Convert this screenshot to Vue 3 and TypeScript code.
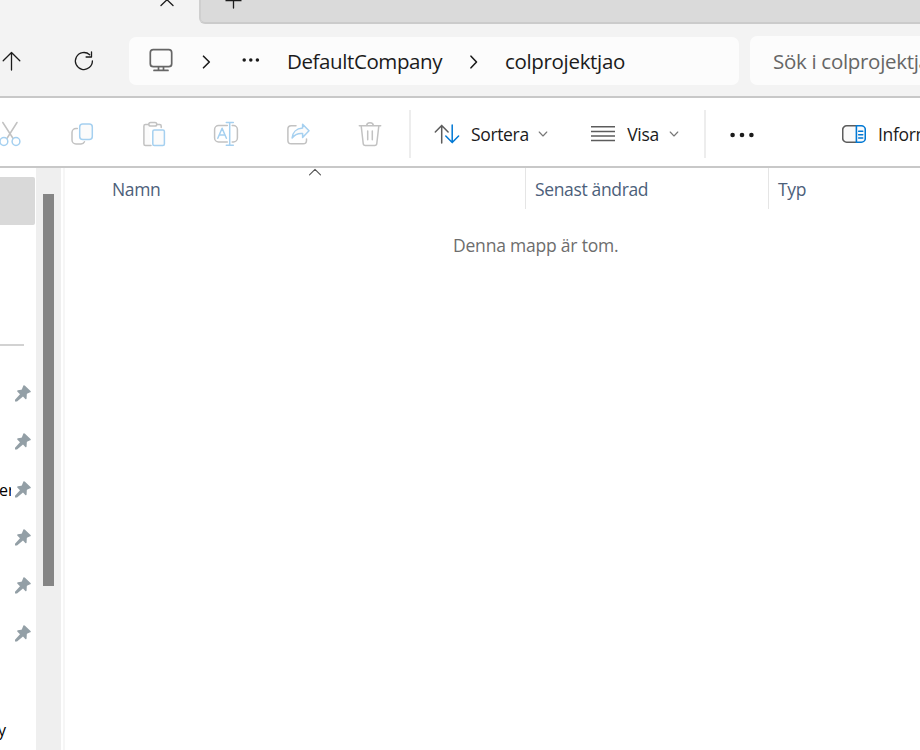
<script setup lang="ts">
interface Column {
  label: string
  cls: string
}

interface SideRow {
  id: number
  label: string
}

const columns: Column[] = [
  { label: 'Namn', cls: 'name' },
  { label: 'Senast ändrad', cls: 'date' },
  { label: 'Typ', cls: 'type' },
]

const pinned: SideRow[] = [
  { id: 1, label: '' },
  { id: 2, label: '' },
  { id: 3, label: 'er' },
  { id: 4, label: '' },
  { id: 5, label: '' },
  { id: 6, label: '' },
]
</script>

<template>
  <div class="window">
    <header class="tabs">
      <div class="active-tab">
        <svg class="close" width="16" height="24" viewBox="159 0 16 24"><path d="M161-6l12 11.5M173-6l-12 11.5" /></svg>
      </div>
      <div class="tab-strip">
        <svg width="18" height="22" viewBox="224 0 18 22"><path d="M226 .7h15M233.500-7V8" /></svg>
      </div>
    </header>

    <nav class="address">
      <svg class="up" width="24" height="24" viewBox="0 49 24 24"><path d="M11.500 70V52.500M3.200 60.800l8.300-8.300 8.300 8.300" /></svg>
      <svg class="refresh" width="24" height="24" viewBox="72 49 24 24"><path d="M92.400 60.800a8.500 8.500 0 1 1-2.700-6M91.500 51.800v5.200h-5.400" /></svg>
      <div class="crumbs">
        <svg class="monitor" width="24" height="24" viewBox="149 48 24 24">
          <rect x="150.300" y="49.700" width="21.400" height="17" rx="3" />
          <path d="M158.500 67v3M163.500 67v3M154 70.400h14" />
        </svg>
        <svg class="crumb-arrow first" width="10" height="16" viewBox="0 0 10 16"><path d="M2.500 2.200l5.800 5.800L2.500 13.800" /></svg>
        <svg class="crumb-dots" width="18" height="6" viewBox="0 0 18 6"><circle cx="2.200" cy="3" r="1.750" /><circle cx="8.800" cy="3" r="1.750" /><circle cx="15.400" cy="3" r="1.750" /></svg>
        <span class="crumb company">DefaultCompany</span>
        <svg class="crumb-arrow" width="10" height="16" viewBox="0 0 10 16"><path d="M2 2.200l5.500 5.800L2 13.800" /></svg>
        <span class="crumb project">colprojektjao</span>
      </div>
      <div class="search"><span>Sök i colprojektjao</span></div>
    </nav>

    <div class="toolbar">
      <div class="file-actions">
        <svg width="28" height="28" viewBox="0 0 28 28">
          <path class="g" d="M6.800 2.500l10.300 16M21 2.500L10.900 18.500" />
          <circle class="b" cx="7.900" cy="21.500" r="3.900" /><circle class="b" cx="20" cy="21.500" r="3.900" />
        </svg>
        <svg width="28" height="28" viewBox="0 0 28 28">
          <path class="g" d="M9.300 8.500H8a4 4 0 0 0-4 4V20a4 4 0 0 0 4 4h5q2.500 0 3.500-2.200" />
          <rect class="b f" x="11.700" y="4" width="12.600" height="15.400" rx="3" />
        </svg>
        <svg width="28" height="28" viewBox="0 0 28 28">
          <path class="g f" d="M8.700 4.500H5.400a1.500 1.500 0 0 0-1.500 1.500v18a1.500 1.500 0 0 0 1.500 1.500H11M16.700 4.500h3a1.500 1.500 0 0 1 1.500 1.500v1.500" />
          <rect class="g f" x="8.800" y="2.500" width="8" height="3.600" rx="1.800" />
          <rect class="b f" x="12.800" y="9.900" width="11.600" height="15.600" rx="1.500" />
        </svg>
        <svg width="28" height="28" viewBox="0 0 28 28">
          <path class="g" d="M15.300 5.600H6.600a4 4 0 0 0-4 4V18a4 4 0 0 0 4 4h8.700M20.200 5.600h1.200a4 4 0 0 1 4 4V18a4 4 0 0 1-4 4h-1.200" />
          <path class="b" d="M17.700 2.600v22.700M14.300 2.600h7M14.300 25.300h7M5.800 18.300l4.300-10 4.300 10M7.300 14.900h5.600" />
        </svg>
        <svg width="28" height="28" viewBox="0 0 28 28">
          <path class="g" d="M12 5.700H7.200a3.300 3.300 0 0 0-3.300 3.300v11.500A3.300 3.300 0 0 0 7.200 23.800h12a3.300 3.300 0 0 0 3.300-3.300V19" />
          <path class="b f" d="M18.600 4.300l6.400 6.500-6.400 6.600v-3.900c-4.600-.4-8 1.100-10.500 4.500.4-5.300 4-9.500 10.500-9.900z" />
        </svg>
        <svg width="28" height="28" viewBox="0 0 28 28">
          <path class="g" d="M3.300 5.700h21.400M10.700 5.700a3.300 3 0 0 1 6.600 0M5.200 6l2 17.500a2.200 2.200 0 0 0 2.200 2h9.200a2.200 2.200 0 0 0 2.200-2L22.800 6M11.700 11v8.700M16.300 11v8.700" />
        </svg>
      </div>
      <i class="divider" />
      <button class="sort">
        <svg width="26" height="22" viewBox="434 123 26 22">
          <path class="dark" d="M441.700 143v-17.600M435.300 132l6.400-6.600 6.400 6.600" />
          <path class="accent" d="M452.200 125v17.600M445.800 136l6.400 6.600 6.400-6.600" />
        </svg>
        <span class="label">Sortera</span>
        <svg class="drop" width="10" height="8" viewBox="0 0 10 8"><path d="M1.200 2l3.800 4 3.800-4" /></svg>
      </button>
      <button class="view">
        <svg width="24" height="18" viewBox="0 0 24 18"><path class="dark lines" d="M0 1.700h24M0 6.500h24M0 11h24M0 15.500h24" /></svg>
        <span class="label">Visa</span>
        <svg class="drop" width="10" height="8" viewBox="0 0 10 8"><path d="M1.200 2l3.800 4 3.800-4" /></svg>
      </button>
      <i class="divider" />
      <svg class="more" width="26" height="8" viewBox="0 0 26 8"><circle cx="3.600" cy="4" r="2.300" /><circle cx="13" cy="4" r="2.300" /><circle cx="22.400" cy="4" r="2.300" /></svg>
      <button class="info">
        <svg width="24" height="20" viewBox="0 0 24 20">
          <path class="dark pane" d="M14 1.800H4.700a4 4 0 0 0-4 4v8.400a4 4 0 0 0 4 4H14" />
          <path class="accent pane" d="M14.400 1.800h4.900a4 4 0 0 1 4 4v8.400a4 4 0 0 1-4 4h-4.900zM16.700 7.200h4M16.700 10.700h4M16.700 14h4" />
        </svg>
        <span class="label">Information</span>
      </button>
    </div>

    <main class="body">
      <aside class="sidebar">
        <div class="selected" />
        <div class="rule" />
        <div class="pins">
          <div v-for="row in pinned" :key="row.id" class="row">
            <span class="row-label">{{ row.label }}</span>
            <svg width="17" height="17" viewBox="0 0 17 17"><path d="M8.300.8c.6-.7 1.200-.5 1.700 0l5.500 5.100c.6.600.4 1.100-.4 1.400l-2.600 1.200c-.5.200-.7.500-.7.900l-.2 3.800c0 .9-.6 1.200-1.300.7L8 11.600 2 16.400H0v-1.600l5-5.500-2.500-2.500c-.6-.6-.3-1.300.4-1.500l3.400-.6c.4-.1.600-.4.700-.8z" /></svg>
          </div>
        </div>
        <div class="last">y</div>
      </aside>
      <div class="track"><div class="thumb" /></div>
      <section class="files">
        <div class="columns">
          <div v-for="column in columns" :key="column.label" :class="['column', column.cls]"><span>{{ column.label }}</span></div>
          <svg class="ascending" width="14" height="8" viewBox="0 0 14 8"><path d="M1.500 6.800L7 1.400l5.500 5.400" /></svg>
        </div>
        <p class="empty"><span>Denna mapp är tom.</span></p>
      </section>
    </main>
  </div>
</template>

<style>
body {
  background: #fff;
  overflow: hidden;
}
</style>

<style scoped>
.window {
  width: 920px;
  height: 750px;
  overflow: hidden;
  display: flex;
  flex-direction: column;
  background: #fff;
  font-family: "Open Sans", "Noto Sans", sans-serif;
  color: #1b1b1b;
}
.window * { box-sizing: border-box; }
svg { display: block; flex: none; fill: none; stroke-linecap: round; stroke-linejoin: round; }
span { white-space: nowrap; }

.tabs { height: 24px; flex: none; display: flex; background: #f3f3f3; }
.active-tab { width: 199px; display: flex; justify-content: flex-end; padding-right: 24px; }
.tabs path { stroke: #1b1b1b; stroke-width: 1.3; }
.tab-strip {
  flex: 1;
  padding-left: 23px;
  background: #dadada;
  border-bottom: 2px solid #cbcbcb;
  border-left: 2px solid #cfcfcf;
  border-bottom-left-radius: 6px;
}

.address {
  height: 74px;
  flex: none;
  display: flex;
  align-items: flex-start;
  background: #f3f3f3;
  border-bottom: 2px solid #c8c8c8;
}
.up, .refresh { margin-top: 25px; stroke: #1b1b1b; stroke-width: 1.3; }
.refresh { margin-left: 48px; }
.crumbs {
  width: 610px;
  height: 48px;
  flex: none;
  margin: 13px 0 0 33px;
  padding-left: 20px;
  display: flex;
  align-items: center;
  background: #fcfcfc;
  border-radius: 7px;
}
.monitor { margin-bottom: 2px; stroke: #666; stroke-width: 1.7; }
.crumb-arrow { margin-top: 2px; stroke: #1b1b1b; stroke-width: 1.6; }
.crumb-arrow.first { margin-left: 28px; }
.crumb-dots { margin: 0 0 3px 31px; fill: #1b1b1b; }
.crumb { font-size: 20.5px; line-height: 28px; }
.company { width: 155px; margin: 0 27px 0 27px; letter-spacing: -0.4px; }
.project { margin-left: 26px; letter-spacing: -0.33px; }
.search {
  flex: 1;
  height: 49px;
  margin: 12px 0 0 11px;
  padding: 1px 0 0 23px;
  overflow: hidden;
  display: flex;
  align-items: center;
  background: #fcfcfc;
  border-radius: 7px 0 0 7px;
  color: #666;
  font-size: 20.5px;
  letter-spacing: -0.3px;
}

.toolbar { height: 70px; flex: none; display: flex; align-items: center; border-bottom: 2px solid #c8c8c8; padding-top: 4px; }
.file-actions { display: flex; gap: 44px; margin-left: -4px; width: 413px; flex: none; }
.g { stroke: #c2c2c2; stroke-width: 1.5; }
.b { stroke: #a5d0f0; stroke-width: 1.5; }
.f { fill: #fbfbfb; }
.divider { width: 2px; height: 48px; flex: none; background: #ededed; }
button { border: 0; padding: 0; background: none; color: inherit; font: inherit; display: flex; align-items: center; flex: none; }
.dark { stroke: #5c5c5c; stroke-width: 1.5; }
.accent { stroke: #0078d4; stroke-width: 1.5; }
.lines { stroke-width: 1.6; stroke-linecap: butt; }
.pane { stroke-width: 1.6; fill: #fafafa; }
.label { font-size: 17.5px; line-height: 24px; letter-spacing: -0.35px; }
.sort { margin-left: 23px; width: 114px; }
.sort .label { width: 57px; margin: 0 10px 0 11px; }
.view { margin-left: 43px; width: 90px; }
.view .label { width: 32px; margin: 0 10px 0 12px; }
.view + .divider { margin-left: 23px; }
.drop { stroke: #777; stroke-width: 1.1; }
.more { margin: 2px 0 0 23px; fill: #1b1b1b; }
.info { margin-left: 87px; gap: 12px; }

.body { height: 582px; flex: none; display: flex; }
.sidebar { width: 36px; flex: none; display: flex; flex-direction: column; overflow: hidden; }
.selected { width: 35px; height: 48px; margin-top: 9px; background: #d9d9d9; border-radius: 0 2px 2px 0; flex: none; }
.rule { width: 24px; height: 2px; flex: none; margin-top: 119px; background: #d2d2d2; }
.pins { margin-top: 24px; }
.row { height: 48px; display: flex; align-items: center; color: #000; }
.row-label { width: 11px; height: 22px; overflow: hidden; margin-right: 3px; font-size: 16px; line-height: 22px; text-indent: -1px; }
.row svg { fill: #939fa6; margin: 0 0 2px 1px; }
.last { margin: 51px 0 0 -2px; padding-top: 10px; line-height: 22px; font-size: 16px; height: 32px; color: #000; }
.track { width: 25px; flex: none; background: #efefef; padding: 26px 0 0 7px; }
.thumb { width: 11px; height: 392px; background: #858585; }
.files { flex: 1; margin-left: 2px; border-left: 2px solid #f6f6f6; }
.columns { position: relative; display: flex; height: 41px; color: #4c607a; }
.column { height: 41px; flex: none; font-size: 17.5px; letter-spacing: -0.35px; line-height: 24px; padding-top: 9px; }
.name { width: 460px; padding-left: 47px; }
.date { width: 243px; padding-left: 9px; border-left: 1px solid #e5e5e5; }
.type { padding-left: 9px; border-left: 1px solid #e5e5e5; flex: 1; }
.ascending { position: absolute; left: 242.500px; top: 0; stroke: #555; stroke-width: 1.1; }
.empty { margin: 24px 0 0; padding-left: 388px; color: #6d6d6d; font-size: 17.5px; letter-spacing: -0.21px; line-height: 24px; }
</style>
